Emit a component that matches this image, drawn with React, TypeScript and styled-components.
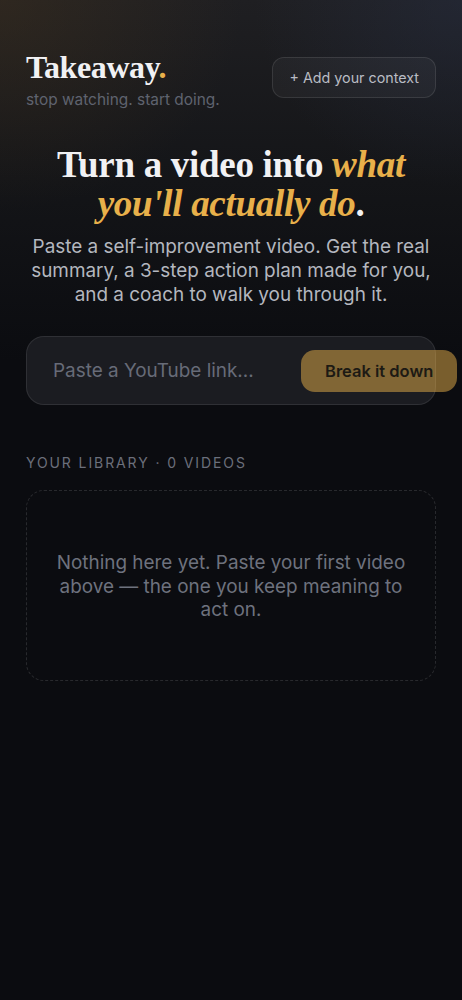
import * as React from "react";
import styled, { createGlobalStyle } from "styled-components";

const GlobalStyle = createGlobalStyle`
  html, body {
    margin: 0;
    padding: 0;
    background: #0b0c10;
  }
  body {
    font-family: Inter, "Noto Sans", sans-serif;
    color: #e9e9ec;
  }
`;

const Page = styled.div`
  min-height: 1000px;
  box-sizing: border-box;
  padding: 48px 26px 40px;
  background:
    radial-gradient(ellipse 70% 28% at 0% 0%, rgba(70, 52, 28, 0.4), transparent 75%),
    radial-gradient(ellipse 60% 25% at 100% 0%, rgba(40, 48, 70, 0.45), transparent 75%),
    linear-gradient(180deg, #1f1f22 0px, #141518 180px, #0b0c10 360px, #0b0c10 100%);
  overflow: hidden;
`;

const Header = styled.header`
  display: flex;
  justify-content: space-between;
  align-items: flex-start;
`;

const Brand = styled.div`
  display: flex;
  flex-direction: column;
`;

const Logo = styled.h1`
  margin: 0;
  font-family: "Liberation Serif", "DejaVu Serif", serif;
  font-weight: 700;
  font-size: 32px;
  line-height: 38px;
  color: #f1f1f3;
  letter-spacing: -0.4px;
`;

const Dot = styled.span`
  color: #e8b04a;
`;

const Tagline = styled.div`
  margin-top: 4px;
  font-size: 15.4px;
  color: #5f636f;
`;

const ContextButton = styled.button`
  margin-top: 9px;
  height: 41px;
  padding: 0 16px;
  border-radius: 12px;
  border: 1px solid rgba(255, 255, 255, 0.1);
  background: rgba(255, 255, 255, 0.04);
  color: #b9bcc4;
  font-family: inherit;
  font-size: 14.3px;
`;

const Hero = styled.section`
  margin-top: 36px;
  text-align: center;
`;

const Headline = styled.h2`
  margin: 0;
  font-family: "Liberation Serif", "DejaVu Serif", serif;
  font-weight: 700;
  font-size: 37px;
  line-height: 39px;
  color: #f1f1f3;
  letter-spacing: -0.3px;
`;

const Accent = styled.em`
  color: #e8b04a;
  font-style: italic;
`;

const Lead = styled.p`
  margin: 12px 0 0;
  font-size: 18.9px;
  line-height: 24px;
  color: #b4b7bf;
`;

const LinkForm = styled.form`
  margin-top: 29px;
  display: flex;
  align-items: center;
  width: 100%;
  box-sizing: border-box;
  height: 69px;
  padding: 0 0 0 26px;
  border-radius: 18px;
  border: 1px solid rgba(255, 255, 255, 0.09);
  background: #1b1c21;
`;

const LinkInput = styled.input`
  flex: none;
  width: 248px;
  padding: 0;
  border: none;
  outline: none;
  background: transparent;
  font-family: inherit;
  font-size: 18.9px;
  color: #e9e9ec;
  &::placeholder {
    color: #676b78;
  }
`;

const BreakButton = styled.button`
  flex: none;
  height: 42px;
  padding: 0 24px;
  border: none;
  border-radius: 14px;
  background: rgba(232, 176, 74, 0.5);
  color: #1d1a14;
  font-family: inherit;
  font-weight: 600;
  font-size: 16.5px;
  white-space: nowrap;
`;

const Library = styled.section`
  margin-top: 49px;
`;

const SectionLabel = styled.div`
  font-size: 14px;
  letter-spacing: 1.9px;
  text-transform: uppercase;
  color: #6b6f7b;
`;

const EmptyBox = styled.div`
  margin-top: 19px;
  height: 191px;
  box-sizing: border-box;
  border: 1px dashed rgba(255, 255, 255, 0.12);
  border-radius: 18px;
  display: flex;
  align-items: center;
  justify-content: center;
  padding: 2px 26px 0;
  text-align: center;
  font-size: 18.9px;
  line-height: 23.5px;
  color: #6e727e;
`;

export default function App() {
  return (
    <Page>
      <GlobalStyle />
      <Header>
        <Brand>
          <Logo>
            Takeaway<Dot>.</Dot>
          </Logo>
          <Tagline>stop watching. start doing.</Tagline>
        </Brand>
        <ContextButton type="button">+ Add your context</ContextButton>
      </Header>

      <Hero>
        <Headline>
          Turn a video into <Accent>what you'll actually do</Accent>.
        </Headline>
        <Lead>
          Paste a self-improvement video. Get the real summary, a 3-step action
          plan made for you, and a coach to walk you through it.
        </Lead>
      </Hero>

      <LinkForm onSubmit={(e) => e.preventDefault()}>
        <LinkInput placeholder="Paste a YouTube link..." />
        <BreakButton type="submit">Break it down</BreakButton>
      </LinkForm>

      <Library>
        <SectionLabel>Your library · 0 videos</SectionLabel>
        <EmptyBox>
          Nothing here yet. Paste your first video above — the one you keep
          meaning to act on.
        </EmptyBox>
      </Library>
    </Page>
  );
}
